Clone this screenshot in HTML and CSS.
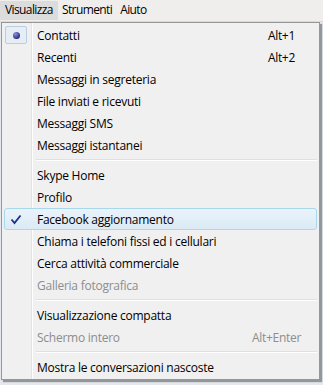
FILE: index.html
```html
<!DOCTYPE html>
<html lang="it">
<head>
  <meta charset="UTF-8" />
  <title>Visualizza</title>
  <link rel="stylesheet" href="styles.css">
</head>
<body>
  <div class="menubar">
    <span class="top open">Visualizza</span>
    <span class="top">Strumenti</span>
    <span class="top">Aiuto</span>
  </div>

  <div class="stage">
    <div class="menu">
      <div class="item"><span class="icon boxed"><span class="dot"></span></span><span class="label">Contatti</span><span class="key">Alt+1</span></div>
      <div class="item"><span class="icon"></span><span class="label">Recenti</span><span class="key">Alt+2</span></div>
      <div class="item"><span class="icon"></span><span class="label">Messaggi in segreteria</span></div>
      <div class="item"><span class="icon"></span><span class="label">File inviati e ricevuti</span></div>
      <div class="item"><span class="icon"></span><span class="label">Messaggi SMS</span></div>
      <div class="item"><span class="icon"></span><span class="label">Messaggi istantanei</span></div>
      <div class="sep"></div>
      <div class="item"><span class="icon"></span><span class="label">Skype Home</span></div>
      <div class="item"><span class="icon"></span><span class="label">Profilo</span></div>
      <div class="item hover"><span class="icon">
        <svg width="12" height="11" viewBox="0 0 12 11"><path d="M1.5 5.5 L4.5 9 L10.5 1.5" fill="none" stroke="#1c2e8c" stroke-width="1.8"/></svg>
      </span><span class="label">Facebook aggiornamento</span></div>
      <div class="item"><span class="icon"></span><span class="label">Chiama i telefoni fissi ed i cellulari</span></div>
      <div class="item"><span class="icon"></span><span class="label">Cerca attività commerciale</span></div>
      <div class="item off"><span class="icon"></span><span class="label">Galleria fotografica</span></div>
      <div class="sep"></div>
      <div class="item"><span class="icon"></span><span class="label">Visualizzazione compatta</span></div>
      <div class="item off"><span class="icon"></span><span class="label">Schermo intero</span><span class="key wide">Alt+Enter</span></div>
      <div class="sep"></div>
      <div class="item"><span class="icon"></span><span class="label">Mostra le conversazioni nascoste</span></div>
    </div>
    <div class="strip"></div>
  </div>
</body>
</html>
```

FILE: styles.css
```css
body {
  margin: 0;
  background: #e4e8ec;
  font-family: 'Open Sans', 'Noto Sans', sans-serif;
  font-size: 12px;
  color: #000;
  width: 323px;
  height: 385px;
  overflow: hidden;
}

.menubar {
  display: flex;
  height: 21px;
  background: #f0eeed;
  border-bottom: 1px solid #d6dbe1;
}

.top {
  padding: 0 4px;
  line-height: 20px;
  letter-spacing: -0.6px;
}

.top.open {
  background: #dcdcdc;
  margin-top: 1px;
  padding: 0 5px;
  line-height: 18px;
  height: 19px;
}

.stage {
  display: flex;
  align-items: flex-start;
}

.menu {
  width: 315px;
  margin-left: 1px;
  padding: 1px 2px 1px 2px;
  background: #f0f0f0;
  border: 1px solid #979797;
  box-shadow: 2px 2px 1px rgba(0, 0, 0, 0.35);
  background-image: linear-gradient(to right, transparent 29px, #e2e3e3 29px, #e2e3e3 30px, #ffffff 30px, #ffffff 31px, transparent 31px);
}

.item {
  display: flex;
  align-items: center;
  height: 22px;
  border: 1px solid transparent;
  border-radius: 3px;
  box-sizing: border-box;
}

.item.hover {
  background: linear-gradient(to bottom, #eaf3fb, #dbeaf5);
  border-color: #a9d8ec;
}

.icon {
  width: 22px;
  height: 18px;
  margin-right: 10px;
  display: flex;
  align-items: center;
  justify-content: center;
  box-sizing: border-box;
}

.icon.boxed {
  background: #e6edf5;
  border: 1px solid #b9cde3;
  border-radius: 2px;
}

.dot {
  width: 7px;
  height: 7px;
  border-radius: 50%;
  background: radial-gradient(circle at 35% 30%, #8d93d8, #2a2f86 70%);
}

.label {
  flex: 1;
  letter-spacing: -0.25px;
}

.key {
  padding-right: 21px;
  letter-spacing: -0.3px;
}

.key.wide {
  padding-right: 15px;
}

.off {
  color: #8d8d8d;
}

.sep {
  height: 1px;
  margin: 3px 0 3px 32px;
  background: #e0e0e0;
  border-bottom: 1px solid #ffffff;
}

.strip {
  flex: 1;
  height: 363px;
  margin-left: 3px;
  background: linear-gradient(to right, #7f8a90, #a9c7d4);
}
```
